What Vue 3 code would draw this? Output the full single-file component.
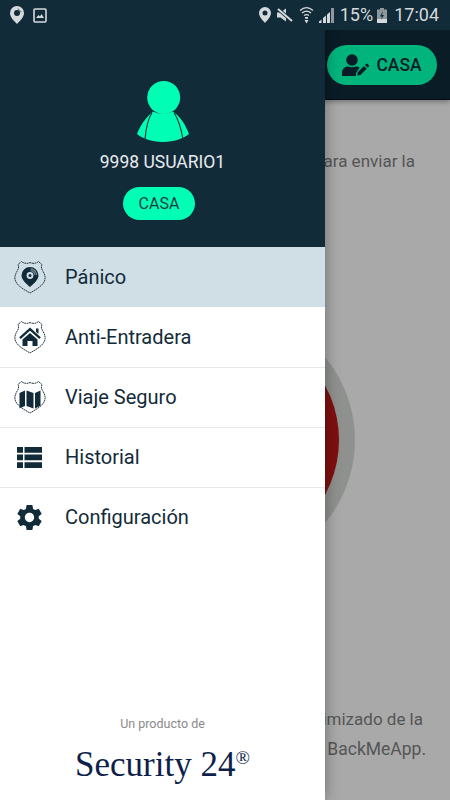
<script setup>
const menu = [
  { label: 'Pánico', icon: 'panic', active: true },
  { label: 'Anti-Entradera', icon: 'home' },
  { label: 'Viaje Seguro', icon: 'map' },
  { label: 'Historial', icon: 'list' },
  { label: 'Configuración', icon: 'gear' }
]

const shield = 'M16 2.500C18 3.800 22 3.800 24.500 1.500L28 4.500C27 6.500 27.300 8.500 28.500 10.500C31 14.500 31.800 17.500 30.500 21C28.500 26 22 29.500 16 33C10 29.500 3.500 26 1.500 21C.2 17.500 1 14.500 3.500 10.500C4.700 8.500 5 6.500 4 4.500L7.500 1.500C10 3.800 14 3.800 16 2.500z'
</script>

<template>
  <div class="screen">
    <div class="status-bar">
      <svg class="st-pin" viewBox="0 0 14 18" width="14" height="18">
        <path fill="#d5d9dc" fill-rule="evenodd" d="M7 0a7 7 0 0 1 7 7c0 4-4 8-7 11-3-3-7-7-7-11a7 7 0 0 1 7-7zm0 4a3 3 0 1 0 0 6 3 3 0 0 0 0-6z" />
        <path fill="#122b39" d="M8 2.200l3.800 3.800-.7.700L7.300 2.900z" opacity=".5" />
      </svg>
      <svg class="st-image" viewBox="0 0 14 15" width="14" height="15">
        <rect x="1" y="1" width="12" height="13" rx="1" fill="none" stroke="#d5d9dc" stroke-width="1.600" />
        <path fill="#d5d9dc" d="M3 10l2.500-3 1.500 1.500L8.500 6 11 10z" />
      </svg>
      <span class="spacer"></span>
      <svg viewBox="0 0 12 16" width="12" height="16">
        <path fill="#d5d9dc" fill-rule="evenodd" d="M6 0a6 6 0 0 1 6 6c0 3.500-3.500 7-6 10C3.500 13 0 9.500 0 6a6 6 0 0 1 6-6zm0 3.500a2.500 2.500 0 1 0 0 5 2.500 2.500 0 0 0 0-5z" />
      </svg>
      <svg class="st-mute" viewBox="0 0 16 14" width="16" height="14">
        <path fill="#d5d9dc" d="M0 4.500h3.500L9 .5v13l-5.500-4H0z" />
        <path stroke="#122b39" stroke-width="3.500" d="M1 1l14 12" />
        <path stroke="#d5d9dc" stroke-width="2" d="M1 1l14 12" />
      </svg>
      <svg class="st-wifi" viewBox="0 0 15 18" width="15" height="18">
        <path fill="none" stroke="#d5d9dc" stroke-width="1.300" d="M1 4.500c4-3.500 9-3.500 13 0M3 7c3-2.500 6-2.500 9 0M5 9.500c1.600-1.200 3.400-1.200 5 0" />
        <path fill="#d5d9dc" d="M6 11h3v1.800H6zM5.500 14h4l-2 3.500z" />
      </svg>
      <svg class="st-signal" viewBox="0 0 15 15" width="15" height="15">
        <path fill="#8d979d" d="M12 0h3v15h-3z" />
        <path fill="#d5d9dc" d="M0 15v-1.500L2.500 11.500V15zM4 15v-5l3-2.500V15zM8 15V6.500L11 4V15z" />
      </svg>
      <span class="st-text st-percent">15%</span>
      <svg class="st-battery" viewBox="0 0 10 15" width="10" height="15">
        <path fill="#8d979d" d="M3 0h4v1.500h3V15H0V1.500h3z" />
        <path fill="#d5d9dc" d="M0 11h10v4H0z" />
        <path fill="#122b39" d="M6 3L3 8.500h2L4 12l3-5H5z" />
      </svg>
      <span class="st-text st-time">17:04</span>
    </div>

    <div class="app-bar">
      <button class="casa-btn">
        <svg viewBox="0 0 27 22" width="27" height="22">
          <circle cx="10" cy="6" r="5.800" fill="#0a1c26" />
          <path fill="#0a1c26" d="M0 22v-3c0-4 2.500-6.500 6-6.500 2.500 1 5.500 1 8 0 1.500 0 2.700.5 3.600 1.300L14 19v3z" />
          <path fill="#0a1c26" d="M16 22l.6-3.200 6.200-6.200 2.700 2.700-6.200 6.200zM23.800 11.600l1-1c.5-.5 1.100-.5 1.600 0l1 1c.5.5.5 1.100 0 1.600l-1 1z" transform="translate(-.8 -.5)" />
        </svg>
        <span>CASA</span>
      </button>
    </div>

    <div class="content">
      <div class="panic-ring">
        <div class="panic-core"></div>
      </div>
      <p class="intro">para enviar la</p>
      <p class="outro">
        <span>optimizado de la</span>
        <span class="outro-last">de BackMeApp.</span>
      </p>
    </div>

    <aside class="drawer">
      <div class="drawer-header">
        <svg class="avatar" viewBox="0 0 52 61" width="52" height="61">
          <circle cx="26.700" cy="16.500" r="16.500" fill="#00ffb4" />
          <path fill="#00ffb4" d="M0 53C3 45 9 36 16 30.500c6 3 14 3 20 0C44 36 49 45 52 53c-5 4-14 8-26 8S5 57 0 53z" />
          <path fill="none" stroke="#122b39" stroke-width="1.100" d="M15 31.500C11 38 9 47 8 58M37 31.500c4 6.500 7 15.500 9 26.500" />
        </svg>
        <div class="user-name">9998 USUARIO1</div>
        <div class="group-pill">CASA</div>
      </div>

      <ul class="menu">
        <li v-for="item in menu" :key="item.label" :class="{ active: item.active }">
          <span class="menu-icon">
            <svg v-if="item.icon === 'panic' || item.icon === 'home' || item.icon === 'map'" viewBox="0 0 32 34" width="32" height="34">
              <path :d="shield" fill="none" stroke="#2a3c46" stroke-width="1" stroke-dasharray="1.800 .5" />
              <template v-if="item.icon === 'panic'">
                <path fill="#122b39" d="M16 7a8.500 8.500 0 0 1 8.500 8.500c0 4-4.500 8-8.500 11.500-4-3.500-8.500-7.500-8.500-11.500A8.500 8.500 0 0 1 16 7z" />
                <path fill="#7d8d96" d="M16.500 8.200a7.300 7.300 0 0 1 6.800 6.800h-3a4.300 4.300 0 0 0-3.800-3.800z" />
                <path fill="none" stroke="#122b39" stroke-width=".7" d="M16.500 9.800a5.800 5.800 0 0 1 5.200 5.200" />
                <circle cx="16" cy="15.500" r="3.400" fill="#d0dfe6" />
                <circle cx="16" cy="15.500" r="1.500" fill="#122b39" />
              </template>
              <path v-else-if="item.icon === 'home'" fill="#122b39" d="M16 7.500l10.800 9.700-1.500 1.800L16 10.800 6.700 19l-1.500-1.800zM22 8.500h2.500v5.500L22 11.800zM16 13l7.500 6.600V26h-5v-5h-5v5h-5v-6.400z" />
              <path v-else fill="#122b39" d="M5.500 13l5.500-2.500V26l-5.500 2.200zM12.500 10.500l7 2.500v15.500l-7-2.500zM21 13l5.500-2.500v15.300L21 28.500z" />
            </svg>
            <svg v-else-if="item.icon === 'list'" viewBox="0 0 25 21" width="25" height="21">
              <path fill="#122b39" d="M0 0h6v5.700H0zM7.500 0H25v5.700H7.500zM0 7.600h6v5.700H0zM7.500 7.600H25v5.700H7.500zM0 15.300h6V21H0zM7.500 15.300H25V21H7.500z" />
            </svg>
            <svg v-else viewBox="0 0 24 24" width="31" height="31">
              <path fill="#122b39" d="M19.140 12.940c.04-.3.06-.61.06-.94 0-.32-.02-.64-.07-.94l2.030-1.580c.18-.14.23-.41.12-.61l-1.920-3.320c-.12-.22-.37-.29-.59-.22l-2.390.96c-.5-.38-1.030-.7-1.620-.94l-.36-2.540c-.04-.24-.24-.41-.48-.41h-3.840c-.24 0-.43.17-.47.41l-.36 2.540c-.59.24-1.130.57-1.620.94l-2.390-.96c-.22-.08-.47 0-.59.22L2.740 8.870c-.12.21-.08.47.12.61l2.030 1.580c-.05.3-.09.63-.09.94s.02.64.07.94l-2.030 1.580c-.18.14-.23.41-.12.61l1.920 3.320c.12.22.37.29.59.22l2.390-.96c.5.38 1.030.7 1.620.94l.36 2.540c.05.24.24.41.48.41h3.840c.24 0 .44-.17.47-.41l.36-2.540c.59-.24 1.130-.56 1.620-.94l2.390.96c.22.08.47 0 .59-.22l1.920-3.320c.12-.22.07-.47-.12-.61l-2.010-1.580zM12 15.600c-1.980 0-3.600-1.620-3.600-3.600s1.620-3.600 3.600-3.600 3.600 1.620 3.600 3.600-1.620 3.600-3.600 3.600z" />
            </svg>
          </span>
          <span class="menu-label">{{ item.label }}</span>
        </li>
      </ul>

      <div class="drawer-footer">
        <div class="made-by">Un producto de</div>
        <div class="brand">Security 24<sup>®</sup></div>
      </div>
    </aside>
  </div>
</template>

<style scoped>
.screen { position: relative; width: 450px; height: 800px; overflow: hidden; display: flex; flex-direction: column; background: #a9a9a9; font-family: Roboto, "Liberation Sans", sans-serif; }

.status-bar { position: relative; z-index: 3; height: 30px; flex: none; display: flex; align-items: center; padding: 0 11px 0 10px; background: #122b39; box-sizing: border-box; }
.st-image { margin-left: 9px; }
.spacer { flex: 1; }
.st-mute { margin-left: 6px; }
.st-wifi { margin-left: 6px; }
.st-signal { margin-left: 5px; }
.st-text { color: #d5d9dc; font-size: 18px; line-height: 30px; }
.st-percent { margin-left: 6px; }
.st-battery { margin-left: 4px; }
.st-time { margin-left: 7px; }

.app-bar { height: 69px; flex: none; display: flex; justify-content: flex-end; align-items: center; padding: 0 13px 0 0; background: #0a1c26; border-bottom: 1px solid #050d12; box-shadow: 0 2px 5px rgba(0, 0, 0, .3); }
.casa-btn { width: 110px; height: 40px; display: flex; align-items: center; justify-content: center; gap: 7px; padding: 0; border: none; border-radius: 20px; background: #00b47c; color: #0a1c26; font-family: inherit; font-size: 17.500px; font-weight: 500; }

.content { position: relative; flex: 1; display: flex; flex-direction: column; justify-content: space-between; padding: 46px 35px 36px 0; }
.intro { margin: 0; color: #555; font-size: 17px; line-height: 30px; text-align: right; white-space: nowrap; }
.outro { margin: 0 -8px 0 0; color: #555; font-size: 17px; line-height: 30px; text-align: right; white-space: nowrap; }
.outro span { display: block; }
.outro .outro-last { margin-right: -3px; font-size: 17.500px; }

.panic-ring { position: absolute; left: 95px; top: 210px; width: 260px; height: 260px; border-radius: 50%; background: #8f918f; display: flex; align-items: center; justify-content: center; }
.panic-core { width: 228px; height: 228px; border-radius: 50%; background: #7f0f0f; }

.drawer { position: absolute; z-index: 2; top: 0; left: 0; bottom: 0; width: 325px; display: flex; flex-direction: column; background: #fff; box-shadow: 0 0 14px rgba(0, 0, 0, .35); }
.drawer-header { height: 247px; flex: none; display: flex; flex-direction: column; align-items: center; padding-top: 81px; box-sizing: border-box; background: #122b39; }
.avatar { display: block; }
.user-name { margin-top: 9px; color: #e8ecee; font-size: 17.500px; line-height: 22px; }
.group-pill { margin-top: 14px; margin-right: 7px; width: 72px; height: 33px; display: flex; align-items: center; justify-content: center; border-radius: 17px; background: #00ffb4; color: #1a3a44; font-size: 16px; }

.menu { list-style: none; margin: 0; padding: 0; }
.menu li { height: 60px; box-sizing: border-box; display: flex; align-items: center; color: #122b39; }
.menu li + li + li { box-shadow: inset 0 1px 0 #e8e8e8; }
.menu li.active { background: #d0dfe6; }
.menu-icon { width: 65px; flex: none; display: flex; justify-content: center; padding-right: 6px; box-sizing: border-box; }
.menu-label { font-size: 20px; }

.drawer-footer { margin-top: auto; padding-bottom: 14px; text-align: center; }
.made-by { color: #8a8a8a; font-size: 12.500px; line-height: 16px; }
.brand { margin-top: 12px; color: #0e1f4a; font-family: "Liberation Serif", serif; font-size: 35px; line-height: 42px; }
.brand sup { font-size: 19px; line-height: 0; vertical-align: 12px; }
</style>

<style>
body { margin: 0; }
</style>
